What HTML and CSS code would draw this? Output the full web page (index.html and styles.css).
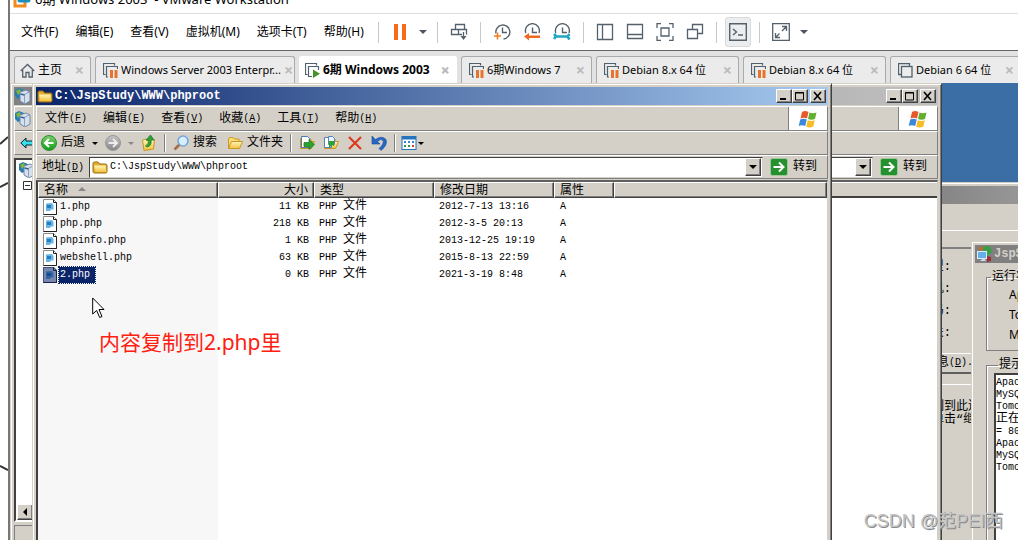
FILE: index.html
```html
<!DOCTYPE html>
<html lang="zh-CN">
<head>
<meta charset="utf-8">
<title>6期 Windows 2003 - VMware Workstation</title>
<link rel="stylesheet" href="styles.css">
</head>
<body>
<svg class="defs" width="0" height="0" aria-hidden="true">
  <defs>
    <linearGradient id="green" x1="0" y1="0" x2="0" y2="1"><stop offset="0" stop-color="#7bd06a"/><stop offset="1" stop-color="#149a1c"/></linearGradient>
    <linearGradient id="gray" x1="0" y1="0" x2="0" y2="1"><stop offset="0" stop-color="#c4c4c4"/><stop offset="1" stop-color="#858585"/></linearGradient>
    <linearGradient id="gold" x1="0" y1="0" x2="0" y2="1"><stop offset="0" stop-color="#fff6b8"/><stop offset="1" stop-color="#f0c340"/></linearGradient>
    <symbol id="stack" viewBox="0 0 15 15"><path d="M3.500 11.500H.5V.5h11v3" fill="none" stroke="#50606c" stroke-width="1.300"/><rect x="3.500" y="3.500" width="10.500" height="10.500" fill="#ececec" stroke="#50606c" stroke-width="1.300"/></symbol>
    <symbol id="vm-paused" viewBox="0 0 15 15"><path d="M2.500 11.500H.5V.5h11v2M5 14H3.500V3.500h11V6" fill="none" stroke="#50606c" stroke-width="1.200"/><path d="M7 7h3v8H7zM11.500 7h3v8h-3z" fill="#e8732c"/></symbol>
    <symbol id="vm-running" viewBox="0 0 15 15"><path d="M2.500 11.500H.5V.5h11v2M7 13.500H3.500v-10h10V7" fill="none" stroke="#50606c" stroke-width="1.200"/><path d="M8 6.500l7 4.200-7 4.200z" fill="#43942a"/></symbol>
    <symbol id="folder" viewBox="0 0 16 16"><path d="M1 4.500q0-1.500 1.500-1.500h3.500l1.500 2h6q1.500 0 1.500 1.500v6q0 1.500-1.500 1.500h-11Q1 14 1 12.500z" fill="#e3ae2b" stroke="#9a6d10"/><path d="M2 6.500h11.500l1 6.500H3.500z" fill="url(#gold)"/></symbol>
    <symbol id="open-folder" viewBox="0 0 16 16"><path d="M1.500 13V4l1-1.500h3.500L7.500 4H12v3" fill="#f9dc76" stroke="#c99620"/><path d="M1.500 13.500l3-7h11l-3 7z" fill="url(#gold)" stroke="#c99620"/></symbol>
    <symbol id="flag" viewBox="0 0 20 18"><path d="M4 2q3-2 6.500 0L9 8.500Q5.500 7 2.500 8.500z" fill="#e8582a"/><path d="M11.500 2.500q3.500 1.500 7 0L17 9q-3.500 1.500-7 0z" fill="#62ae2f"/><path d="M2.200 9.500q3.300-1.500 6.500 0L7.200 16q-3.500-1.500-6.500 0z" fill="#3c86dc"/><path d="M9.700 10.200q3.500 1.500 7 0l-1.500 6.500q-3.500 1.500-7 0z" fill="#f6bd26"/></symbol>
    <symbol id="go" viewBox="0 0 18 18"><rect x=".5" y=".5" width="17" height="17" rx="2" fill="#24902f" stroke="#9fc79c"/><path d="M3.500 9h10M9 4.500L13.500 9 9 13.500" fill="none" stroke="#fff" stroke-width="2"/></symbol>
    <symbol id="phpfile" viewBox="0 0 14 16"><path d="M.5.5h10l3 3v12H.5z" fill="#fff" stroke="#8a8a8a"/><path d="M10.500.5v3h3v12H.5" fill="none" stroke="#222"/><path d="M3 4.500l6-.5 1.500 2v4.500H8L7 12H3z" fill="#65b4e4"/><path d="M4 6h4v3H4z" fill="#237cbf"/></symbol>
    <symbol id="server" viewBox="0 0 16 16"><path d="M0 2l4-2 5 2-1 7-5 2-3-3z" fill="#267db5"/><path d="M1 3l4-2 1 3-3 3z" fill="#87b72e"/><path d="M5 4l6-2 4 2v9l-5 3-5-3z" fill="#d6e0ec" stroke="#7186a8"/><path d="M9.500 6v9.500M10 6l4.500-2" stroke="#8ca1c0"/><path d="M5.500 6l4 1" stroke="#34639e" stroke-width="1.500"/></symbol>
    <symbol id="min" viewBox="0 0 12 10"><path d="M2 8h6" stroke="#000" stroke-width="2"/></symbol>
    <symbol id="max" viewBox="0 0 12 10"><path d="M1.500 1.500h8v7.500h-8zM1 2h9" fill="none" stroke="#000"/></symbol>
    <symbol id="close" viewBox="0 0 12 10"><path d="M2 1l7 8M9 1L2 9" stroke="#000" stroke-width="1.600"/></symbol>
    <symbol id="down" viewBox="0 0 8 4"><path d="M0 0h8L4 4z"/></symbol>
    <symbol id="clock" viewBox="0 0 18 18"><path d="M3 10.500A7 7 0 1 1 10.500 16M9.500 4.500v5H14" fill="none" stroke="#54616c" stroke-width="1.400"/></symbol>
    <symbol id="clock-top" viewBox="0 0 18 18"><path d="M2.800 10A7 7 0 1 1 16 10M9.500 4.500v5H14" fill="none" stroke="#54616c" stroke-width="1.400"/></symbol>
  </defs>
</svg>
<div class="page">
  <svg class="sketch" viewBox="0 0 8 540" preserveAspectRatio="none" aria-hidden="true"><path d="M0 144L8 137M0 187l8-4M0 466l8 4" stroke="#333" stroke-width="2"/></svg>
  <main class="vmware">
    <header class="titlebar">
      <svg class="logo" viewBox="0 0 18 18"><path d="M5 5H2v11h10v-4" fill="none" stroke="#f08c1e" stroke-width="3"/><rect x="6" y="1" width="10" height="10" rx="1" fill="none" stroke="#1b8fc0" stroke-width="3"/></svg>
      <h1>6期 Windows 2003&nbsp; - VMware Workstation</h1>
    </header>
    <div class="commands">
      <nav class="menu">
        <button>文件(F)</button><button>编辑(E)</button><button>查看(V)</button><button>虚拟机(M)</button><button>选项卡(T)</button><button>帮助(H)</button>
      </nav>
      <i class="rule"></i>
      <button class="tool" aria-label="挂起"><svg width="14" height="18"><path d="M1 1h4v16H1zM9 1h4v16H9z" fill="#f76b1c"/></svg></button>
      <button class="caret" aria-label="电源选项"><svg width="8" height="4"><use href="#down"/></svg></button>
      <i class="rule"></i>
      <button class="tool" aria-label="发送"><svg width="18" height="18"><path d="M5.500 1.500h9v5h-9zM1.500 6.500h7v5h-7zM8.500 6.500h8v5M8.500 11.500H12M13.500 9v6" fill="none" stroke="#54616c" stroke-width="1.300"/><path d="M10.500 13h6l-3 4z" fill="#54616c"/></svg></button>
      <i class="rule"></i>
      <button class="tool" aria-label="拍摄快照"><svg width="18" height="18"><use href="#clock"/><path d="M1 13h7M4.500 9.500v7" stroke="#f07c22" stroke-width="1.500"/></svg></button>
      <button class="tool" aria-label="恢复快照"><svg width="18" height="18"><use href="#clock-top"/><path d="M1 13.500L6 10v2.500h11v2.500H6v2.500z" fill="#ee6a20"/></svg></button>
      <button class="tool" aria-label="管理快照"><svg width="18" height="18"><use href="#clock-top"/><path d="M1 11l2 2-2 3M3.500 13.500h10M16.500 11l-2 2.500 2 3" fill="none" stroke="#20a6c0" stroke-width="2.600"/></svg></button>
      <i class="rule"></i>
      <button class="tool" aria-label="库"><svg width="18" height="18"><path d="M1.500 1.500h15v15h-15zM6.500 1.500v15" fill="none" stroke="#54616c" stroke-width="1.300"/></svg></button>
      <button class="tool" aria-label="缩略图"><svg width="18" height="18"><path d="M1.500 1.500h15v14h-15zM1.500 11.500h15" fill="none" stroke="#54616c" stroke-width="1.300"/></svg></button>
      <button class="tool" aria-label="全屏"><svg width="18" height="18"><path d="M5 5h8v8H5zM1 5V.7h4M13 .7h4V5M17 13v4.300h-4M5 17.300H1V13" fill="none" stroke="#54616c" stroke-width="1.300"/></svg></button>
      <button class="tool" aria-label="Unity"><svg width="18" height="18"><path d="M1.500 6.500h10v9h-10zM6.500 6.500v-5h10v9h-5" fill="none" stroke="#54616c" stroke-width="1.300"/></svg></button>
      <i class="rule"></i>
      <button class="tool pressed" aria-label="控制台"><svg width="18" height="18"><path d="M.7.700h16.600v16.600H.7zM4 6l3.500 3L4 12M9 12h5" fill="none" stroke="#54616c" stroke-width="1.400"/></svg></button>
      <i class="rule"></i>
      <button class="tool" aria-label="拉伸"><svg width="18" height="18"><path d="M.7.700h16.600v16.600H.7zM3.500 14.500l4-4M10 8l4-4M10 3.500h4.500V8M3.500 10v4.500H8" fill="none" stroke="#54616c" stroke-width="1.300"/></svg></button>
      <button class="caret" aria-label="显示选项"><svg width="8" height="4"><use href="#down"/></svg></button>
    </div>
    <nav class="tabs">
      <button class="tab home"><svg width="15" height="15"><path d="M.7 8L7.500 1.500 14.300 8M2.700 7v7H6v-4.500h3V14h3.300V7" fill="none" stroke="#54616c" stroke-width="1.300"/></svg><span>主页</span><b>×</b></button>
      <button class="tab wide"><svg width="15" height="15"><use href="#vm-paused"/></svg><span>Windows Server 2003 Enterpr...</span><b>×</b></button>
      <button class="tab medium active"><svg width="15" height="15"><use href="#vm-running"/></svg><span>6期 Windows 2003</span><b>×</b></button>
      <button class="tab small"><svg width="15" height="15"><use href="#vm-paused"/></svg><span>6期Windows 7</span><b>×</b></button>
      <button class="tab"><svg width="15" height="15"><use href="#vm-paused"/></svg><span>Debian 8.x 64 位</span><b>×</b></button>
      <button class="tab"><svg width="15" height="15"><use href="#vm-paused"/></svg><span>Debian 8.x 64 位</span><b>×</b></button>
      <button class="tab small"><svg width="15" height="15"><use href="#stack"/></svg><span>Debian 6 64 位</span><b>×</b></button>
    </nav>

    <div class="desktop">
      <section class="window wizard">
        <div class="caption inactive"></div>
        <div class="wizard-head"></div>
        <div class="wizard-group"><span>类型:</span><span>主机:</span><span>密码:</span><span>网关:</span></div>
        <button class="wizard-button">信息<kbd>(<u>D</u>)...</kbd></button>
        <p class="wizard-note">复制到此连接<br><span>单击“继续”</span></p>
      </section>

      <section class="window jsp">
        <div class="caption dim"><svg width="16" height="16"><path d="M5 1l9-1 2 6-5 4z" fill="#37a044"/><path d="M2 2l4-2 2 3-4 2z" fill="#b56d35"/><rect x="1.500" y="5.500" width="9" height="7" fill="#67afe8" stroke="#dcecf8"/><path d="M4 15h6l-2-3z" fill="#cfe0f2"/><path d="M11 10l4 1v4l-4 1z" fill="#a32b34"/></svg><h2>JspStudy</h2></div>
        <fieldset class="status"><legend>运行状态</legend><p>Apache</p><p>Tomcat</p><p>MySQL</p></fieldset>
        <fieldset class="hints"><legend>提示信息</legend><div class="log">Apache<br>MySQL<br>Tomcat<br><span>正在检测</span><br>= 80<br>Apache<br>MySQL<br>Tomcat</div></fieldset>
      </section>

      <section class="window network">
        <div class="caption dim"><svg width="16" height="16"><use href="#server"/></svg></div>
        <div class="band menu-band"><svg width="16" height="16"><use href="#server"/></svg></div>
        <div class="band tool-band"><svg width="14" height="12"><path d="M.8 6L6 1v3h8v4H6v3z" fill="#35e0e8" stroke="#123"/></svg></div>
        <div class="tree">
          <svg width="16" height="16"><use href="#server"/></svg>
          <svg class="minus" width="9" height="9"><path d="M.5.500h8v8h-8zM2 4.500h5" fill="#fff" stroke="#333"/></svg>
          <button class="classic scroll" aria-label="向左滚动"><svg width="4" height="8"><path d="M4 0v8L0 4z"/></svg></button>
        </div>
        <div class="statusbar"></div>
      </section>

      <section class="window explorer back">
        <div class="caption inactive">
          <button class="classic" aria-label="最小化"><svg width="12" height="10"><use href="#min"/></svg></button><button class="classic" aria-label="最大化"><svg width="12" height="10"><use href="#max"/></svg></button><button class="classic shut" aria-label="关闭"><svg width="12" height="10"><use href="#close"/></svg></button>
        </div>
        <div class="band menu-band"><span class="brand"><svg width="20" height="18"><use href="#flag"/></svg></span></div>
        <div class="band tool-band"></div>
        <div class="band address-band"><div class="combo"><button class="classic drop" aria-label="展开"><svg width="8" height="4"><use href="#down"/></svg></button></div><button class="go"><svg width="18" height="18"><use href="#go"/></svg>转到</button></div>
        <div class="listing"><div class="blank-head"></div></div>
      </section>

      <section class="window explorer front">
        <div class="caption current">
          <svg width="16" height="16"><use href="#folder"/></svg><h2>C:\JspStudy\WWW\phproot</h2>
          <button class="classic" aria-label="最小化"><svg width="12" height="10"><use href="#min"/></svg></button><button class="classic" aria-label="最大化"><svg width="12" height="10"><use href="#max"/></svg></button><button class="classic shut" aria-label="关闭"><svg width="12" height="10"><use href="#close"/></svg></button>
        </div>
        <nav class="band menu-band">
          <button>文件<kbd>(<u>F</u>)</kbd></button><button>编辑<kbd>(<u>E</u>)</kbd></button><button>查看<kbd>(<u>V</u>)</kbd></button><button>收藏<kbd>(<u>A</u>)</kbd></button><button>工具<kbd>(<u>T</u>)</kbd></button><button>帮助<kbd>(<u>H</u>)</kbd></button>
          <span class="brand"><svg width="20" height="18"><use href="#flag"/></svg></span>
        </nav>
        <div class="band tool-band">
          <button><svg width="16" height="16"><circle cx="8" cy="8" r="7.500" fill="url(#green)" stroke="#2f8e36"/><path d="M12.500 8H4.500M8 4L4 8l4 4" fill="none" stroke="#fff" stroke-width="2"/></svg>后退</button>
          <button class="pick" aria-label="后退历史"><svg width="6" height="3" viewBox="0 0 8 4"><use href="#down"/></svg></button>
          <button aria-label="前进"><svg width="16" height="16"><circle cx="8" cy="8" r="7.500" fill="url(#gray)" stroke="#999"/><path d="M3.500 8h8M8 4l4 4-4 4" fill="none" stroke="#eee" stroke-width="2"/></svg></button>
          <button class="pick faded" aria-label="前进历史"><svg width="6" height="3" viewBox="0 0 8 4"><use href="#down"/></svg></button>
          <button aria-label="向上"><svg width="16" height="16"><path d="M1.500 5l3-1 1 1.500 8-1-1 9.500-9.500 1.500z" fill="url(#gold)" stroke="#c99620"/><path d="M6 12q5-1 4-7h3L9.500 0 5 5h2.500q.5 4-3 6z" fill="#2ca336" stroke="#167322" stroke-width=".7"/></svg></button>
          <i class="groove"></i>
          <button><svg width="16" height="16"><path d="M1.500 14.500l5-5" stroke="#a86b48" stroke-width="2.600"/><circle cx="10" cy="6" r="5" fill="#d6efff" stroke="#79a5d8" stroke-width="1.600"/></svg>搜索</button>
          <button class="folders"><svg width="16" height="16"><use href="#open-folder"/></svg>文件夹</button>
          <i class="groove"></i>
          <button class="act" aria-label="移至"><svg width="16" height="16"><use href="#open-folder"/><path d="M2.500 1.500h6l2 2v9h-8z" fill="#fff" stroke="#4d79b5"/><path d="M5 7.500h5v-3l5.500 5-5.500 5v-3H5z" fill="#2da32f" stroke="#14721c" stroke-width=".7"/></svg></button>
          <button class="act" aria-label="复制到"><svg width="16" height="16"><use href="#open-folder"/><path d="M1.500 2.500h5l2 2v8h-7z" fill="#fff" stroke="#5581bd"/><path d="M5.500 1.500h4l2 2v6h-6z" fill="#e8f4ff" stroke="#5581bd"/><path d="M6 6l5 0v5l-2-1-3 3" fill="#2da32f"/></svg></button>
          <button class="act" aria-label="删除"><svg width="16" height="16"><path d="M2 2l12 12M14 2L2 14" stroke="#dc3b20" stroke-width="2.200"/></svg></button>
          <button class="act" aria-label="撤消"><svg width="16" height="16"><path d="M1 1v8h8L6.500 6.500Q10 3 12 5.500q1.500 3-4 8l2 2Q17 10 15 4.500 11 0 4.500 4.500z" fill="#2767c4" stroke="#174c9c" stroke-width=".6"/></svg></button>
          <i class="groove tight"></i>
          <button class="views" aria-label="查看方式"><svg width="16" height="16"><rect x="1" y="1.500" width="14" height="13" fill="#fff" stroke="#2475bd"/><path d="M1 3h14" stroke="#2475bd" stroke-width="3"/><path d="M3 7h2M7 7h2M11 7h2" stroke="#3b87ce" stroke-width="2"/><path d="M3 11h2M7 11h2" stroke="#2a9b4e" stroke-width="2"/><path d="M11 11h2" stroke="#cc432a" stroke-width="2"/></svg><svg width="6" height="3" viewBox="0 0 8 4"><use href="#down"/></svg></button>
        </div>
        <div class="band address-band">
          <label for="address">地址<kbd>(<u>D</u>)</kbd></label>
          <div class="combo"><svg width="16" height="16"><use href="#folder"/></svg><input id="address" type="text" value="C:\JspStudy\WWW\phproot"><button class="classic drop" aria-label="展开"><svg width="8" height="4"><use href="#down"/></svg></button></div>
          <button class="go"><svg width="18" height="18"><use href="#go"/></svg>转到</button>
        </div>
        <div class="listing files">
          <table>
            <colgroup><col class="c-name"><col class="c-size"><col class="c-type"><col class="c-date"><col class="c-attr"><col></colgroup>
            <thead><tr><th>名称<svg class="sort" width="8" height="4"><path d="M0 4h8L4 0z" fill="#888"/></svg></th><th class="num">大小</th><th>类型</th><th>修改日期</th><th>属性</th><th></th></tr></thead>
            <tbody>
              <tr><td><svg width="14" height="16"><use href="#phpfile"/></svg><span>1.php</span></td><td class="num">11 KB</td><td>PHP <em>文件</em></td><td>2012-7-13 13:16</td><td>A</td><td></td></tr>
              <tr><td><svg width="14" height="16"><use href="#phpfile"/></svg><span>php.php</span></td><td class="num">218 KB</td><td>PHP <em>文件</em></td><td>2012-3-5 20:13</td><td>A</td><td></td></tr>
              <tr><td><svg width="14" height="16"><use href="#phpfile"/></svg><span>phpinfo.php</span></td><td class="num">1 KB</td><td>PHP <em>文件</em></td><td>2013-12-25 19:19</td><td>A</td><td></td></tr>
              <tr><td><svg width="14" height="16"><use href="#phpfile"/></svg><span>webshell.php</span></td><td class="num">63 KB</td><td>PHP <em>文件</em></td><td>2015-8-13 22:59</td><td>A</td><td></td></tr>
              <tr class="selected"><td><svg width="14" height="16"><use href="#phpfile"/><path d="M0 0h11l3 3v13H0z" fill="#0a246a" opacity=".55"/></svg><span>2.php</span></td><td class="num">0 KB</td><td>PHP <em>文件</em></td><td>2021-3-19 8:48</td><td>A</td><td></td></tr>
            </tbody>
          </table>
          <svg class="pointer" width="13" height="22"><path d="M.7 1v16l4-3.500 3 7 2.300-1-3-7H12z" fill="#fff" stroke="#000"/></svg>
          <p class="note">内容复制到2.php里</p>
        </div>
      </section>
      <p class="watermark">CSDN @范PEI西</p>
    </div>
  </main>
</div>
</body>
</html>
```

FILE: styles.css
```css
* { box-sizing: border-box; }
body { margin: 0; overflow: hidden; background: #fff; font: 12px/16px "Noto Sans", "Noto Sans CJK SC", sans-serif; color: #000; }
button, input { font: inherit; color: inherit; background: none; border: 0; margin: 0; padding: 0; }
button, span, legend, h1 { white-space: nowrap; }
h1, h2, p { margin: 0; font-size: 12px; font-weight: 400; }
svg { display: block; flex: none; }
.defs { position: absolute; }
.page { display: flex; height: 100vh; }
.sketch { width: 8px; height: 100%; }
.vmware { flex: 1; min-width: 0; display: flex; flex-direction: column; border-left: 2px solid #777; }

.titlebar { display: flex; align-items: flex-end; gap: 4px; height: 14px; padding: 0 3px 5px; border-bottom: 1px solid #ddd; overflow: hidden; flex: none; }
.titlebar h1 { font-size: 13px; line-height: 18px; }
.logo { width: 18px; height: 18px; }
.commands { display: flex; align-items: center; height: 37px; padding-left: 11px; border-bottom: 1px solid #666; flex: none; }
.commands svg { margin: auto; }
.menu { display: flex; gap: 17px; margin-right: 8px; }
.rule { width: 1px; height: 21px; margin: 0 6px; background: #c8c8c8; }
.tool { width: 30px; height: 30px; flex: none; }
.pressed { width: 26px; margin: 0 2px; background: #ebedef; border: 1px solid #d8dadc; border-radius: 3px; }
.caret { width: 16px; height: 20px; fill: #4d5660; }

.tabs { display: flex; gap: 4px; height: 32px; padding: 5px 0 0 4px; background: #e2e2e2; flex: none; overflow: hidden; }
.tab { display: flex; align-items: center; gap: 3px; flex: 0 0 143px; min-width: 0; padding: 0 6px 0 7px; background: #ebebeb; border: 1px solid #aaa; border-bottom: 0; border-radius: 3px 3px 0 0; font-size: 11px; }
.tab b { margin-left: auto; font-size: 16px; color: #bbb; }
.tab.home { flex-basis: 77px; font-size: 12px; padding-left: 5px; }
.tab.wide { flex-basis: 200px; }
.tab.medium { flex-basis: 158px; font-size: 12px; padding-left: 5px; }
.tab.small { flex-basis: 131px; }
.tab.active { background: #fff; border-color: #fff; font-weight: 700; }

.desktop { position: relative; flex: 1; min-height: 0; overflow: hidden; background: #3a6ea5; }
.window { position: absolute; bottom: 0; display: flex; flex-direction: column; background: #d4d0c8; border: 4px solid #d4d0c8; border-bottom: 0; }
.window::before { content: ""; position: absolute; inset: -4px -4px 0; border: 1px solid #d4d0c8; border-right-color: #404040; border-bottom: 0; box-shadow: inset 1px 1px #fff, inset -1px 0 #808080; pointer-events: none; }
.window, .window button { font-family: "Liberation Mono", "Noto Sans CJK SC", monospace; }
kbd { font: 10px/16px "Liberation Mono", monospace; }
.caption { display: flex; align-items: center; height: 18px; padding: 0 2px 0 1px; flex: none; }
.caption h2 { margin-left: 2px; margin-right: auto; color: #fff; font-weight: 700; }
.current { background: linear-gradient(to right, #0a246a, #a6caf0); }
.inactive { background: linear-gradient(to right, #808080, #c0c0c0); justify-content: flex-end; }
.dim { background: #808080; }
.dim h2 { color: #d4d0c8; }
.classic { width: 16px; height: 14px; display: flex; align-items: center; justify-content: center; background: #d4d0c8; border: 1px solid; border-color: #fff #404040 #404040 #fff; box-shadow: inset -1px -1px #808080; flex: none; }
.shut { margin-left: 2px; }
.band { display: flex; align-items: center; height: 24px; border-top: 1px solid #fff; border-bottom: 1px solid #808080; border-left: 1px solid #fff; border-right: 1px solid #808080; flex: none; }
.menu-band { height: 25px; margin-top: 1px; padding-left: 8px; gap: 16px; }
.menu-band button, .tool-band button { display: flex; align-items: center; }
.brand { align-self: stretch; display: flex; align-items: center; justify-content: center; width: 39px; margin-left: auto; background: #fff; border-left: 1px solid #808080; }
.tool-band { padding-left: 4px; gap: 6px; }
.tool-band button { gap: 4px; }
.tool-band .pick { width: 8px; justify-content: center; }
.faded { fill: #888; }
.folders { margin-left: 4px; }
.act { margin-right: 2px; }
.groove { width: 2px; height: 18px; border-left: 1px solid #808080; border-right: 1px solid #fff; margin: 0 1px; }
.tight { margin: 0 -1px; }
.tool-band .views { gap: 1px; }
.address-band { padding: 0 10px 0 5px; gap: 5px; }
.address-band label { white-space: nowrap; }
.combo { display: flex; align-items: center; flex: 1; height: 21px; padding: 0 1px 0 2px; background: #fff; border: 1px solid; border-color: #404040 #d4d0c8 #d4d0c8 #404040; }
.combo input { flex: 1; min-width: 0; margin-left: 2px; font: 10px/16px "Liberation Mono", monospace; }
.drop { height: 18px; margin-left: auto; }
.go { display: flex; align-items: center; gap: 5px; margin-left: 2px; }
.listing { position: relative; flex: 1; margin-top: 1px; border: 2px solid #404040; border-top-color: #606060; border-right: 1px solid #d4d0c8; border-bottom: 0; background: #fff; }
.blank-head { height: 16px; background: #d4d0c8; border-top: 1px solid #fff; border-bottom: 2px solid #404040; }
.files { background: linear-gradient(to right, #f7f7f7 180px, #fff 180px); }

table { width: 100%; table-layout: fixed; border-collapse: separate; border-spacing: 0; font: 10px/16px "Liberation Mono", "Noto Sans CJK SC", monospace; }
.c-name { width: 180px; }
.c-size { width: 96px; }
.c-type, .c-date { width: 120px; }
.c-attr { width: 60px; }
th { height: 16px; padding: 0 5px 2px; text-align: left; font: 12px/12px "Noto Sans CJK SC", sans-serif; background: #d4d0c8; border: 1px solid; border-color: #fff #404040 #404040 #fff; box-shadow: inset -1px -1px #808080; white-space: nowrap; }
td { height: 17px; padding: 0 5px; white-space: nowrap; line-height: 16px; }
td:first-child svg, td:first-child span { display: inline-block; vertical-align: top; }
td:first-child span { height: 16px; padding: 0 1px; margin-left: 2px; }
td:nth-child(5) { padding-left: 6px; }
td em { font: 12px/12px "Noto Sans CJK SC", sans-serif; }
.num { text-align: right; }
.sort { display: inline-block; margin-left: 10px; vertical-align: 3px; }
.selected td:first-child span { padding-right: 5px; background: #0a246a; color: #fff; outline: 1px dotted #0a246a; }
.pointer { position: absolute; left: 54px; top: 115px; }
.note { position: absolute; left: 61px; top: 146px; font: 21px/28px "Noto Sans", "Noto Sans CJK SC", sans-serif; color: #ff2010; white-space: nowrap; }

.explorer { top: 0; width: 800px; }
.front { left: 22px; }
.back { left: 132px; }
.network { left: 0; top: 0; width: 200px; }
.network .band { padding-left: 2px; }
.network .menu-band { padding-left: 0; }
.network .tool-band { padding-left: 5px; }
.tree { flex: 1; display: flex; flex-direction: column; margin-top: 3px; padding: 2px 0 0 3px; background: #fff; border: 2px solid #404040; border-bottom-color: #fff; }
.minus { margin: 3px 0 0 4px; }
.scroll { height: 16px; margin: auto 0 0 -2px; }
.statusbar { height: 15px; margin-top: 3px; border: 1px solid #808080; border-bottom: 0; }

.wizard { left: 900px; right: -200px; top: 99px; }
.wizard-head { height: 27px; border-bottom: 1px solid #fff; flex: none; }
.wizard-group { display: flex; flex-direction: column; align-items: flex-end; gap: 6px; width: 57px; height: 107px; margin-top: 16px; padding: 10px 20px 0 0; border-top: 2px solid #808080; border-bottom: 1px solid #fff; flex: none; }
.wizard-button { height: 20px; width: 71px; display: flex; justify-content: flex-end; align-items: center; border-bottom: 2px solid #606060; flex: none; }
.wizard-note { margin-top: 10px; padding: 16px 0 0 6px; border-top: 1px solid #fff; line-height: 13px; }
.wizard-note span { padding-left: 12px; }
.jsp { left: 961px; right: -200px; top: 158px; bottom: -40px; font-size: 12px; }
fieldset { margin: 6px 11px 0; padding: 0; border: 1px solid #808080; box-shadow: inset 1px 1px #fff; min-width: 0; }
legend { margin-left: 4px; padding: 0 1px; }
.status { height: 82px; }
.status p { padding-left: 22px; line-height: 20px; font-family: "Noto Sans", sans-serif; }
.hints { flex: 1; padding-left: 7px; }
.log { height: 100%; padding: 2px 0; background: #fff; border: 2px solid #404040; font: 10px/12px "Liberation Mono", monospace; }
.log span { font: 12px/8px "Noto Sans CJK SC", sans-serif; }
.watermark { position: absolute; right: 15px; bottom: 6px; font: 18px/26px "Liberation Sans", "Noto Sans CJK SC", sans-serif; color: #c4c4c4; text-shadow: 1px 1px #888; }
```
